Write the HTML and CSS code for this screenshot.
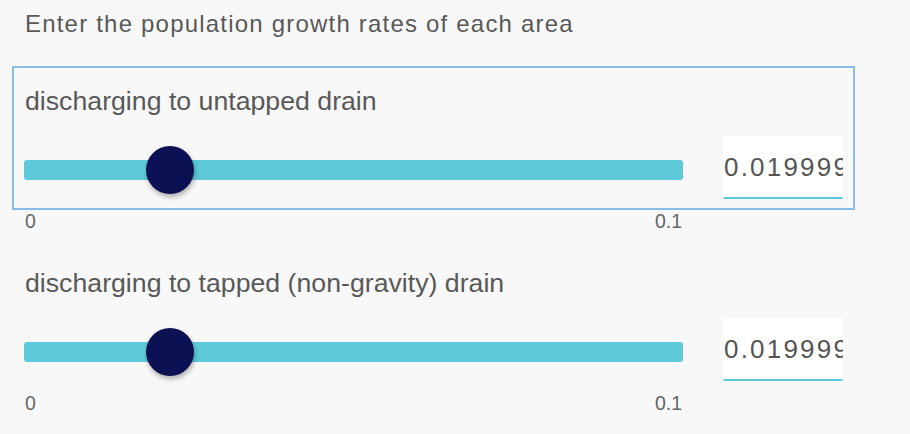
FILE: index.html
```html
<!DOCTYPE html>
<html lang="en">
<head>
<meta charset="utf-8">
<title>Population growth rates</title>
<link rel="stylesheet" href="styles.css">
</head>
<body>
<div class="page">
  <p class="title">Enter the population growth rates of each area</p>

  <div class="field">
    <div class="field-box focused">
      <label class="field-label" for="r1">discharging to untapped drain</label>
      <div class="field-row">
        <div class="slider">
          <input class="range" id="r1" type="range" min="0" max="0.1" step="0.000001" value="0.019999">
        </div>
        <input class="number" type="text" value="0.019999999999999997">
      </div>
    </div>
    <div class="range-labels"><span>0</span><span>0.1</span></div>
  </div>

  <div class="field">
    <div class="field-box">
      <label class="field-label" for="r2">discharging to tapped (non-gravity) drain</label>
      <div class="field-row">
        <div class="slider">
          <input class="range" id="r2" type="range" min="0" max="0.1" step="0.000001" value="0.019999">
        </div>
        <input class="number" type="text" value="0.019999999999999997">
      </div>
    </div>
    <div class="range-labels"><span>0</span><span>0.1</span></div>
  </div>
</div>
</body>
</html>
```
FILE: styles.css
```css
html, body {
  margin: 0;
  padding: 0;
  background: #f8f8f8;
}

body {
  font-family: "Liberation Sans", Arial, sans-serif;
  color: #555;
  width: 910px;
  height: 434px;
  overflow: hidden;
}

.page {
  padding: 9px 0 0 12px;
}

.title {
  margin: 0 0 27px 13px;
  font-size: 24px;
  line-height: 30px;
  letter-spacing: 1.2px;
  color: #595959;
}

.field {
  margin-bottom: 16px;
}

.field-box {
  border: 2px solid transparent;
  padding: 18px 10px 9px 10px;
  box-sizing: content-box;
  width: 819px;
}

.field-box.focused {
  border-color: #88bde9;
}

.field-label {
  display: block;
  margin-left: 1px;
  font-size: 26.7px;
  line-height: 30px;
  color: #595959;
}

.field-row {
  display: flex;
  align-items: flex-start;
  gap: 40px;
  margin-top: 20px;
}

.slider {
  width: 659px;
  height: 63px;
  padding-top: 10px;
  box-sizing: border-box;
}

.range {
  -webkit-appearance: none;
  appearance: none;
  display: block;
  width: 659px;
  height: 48px;
  margin: 0;
  padding: 0;
  background: transparent;
}

.range::-webkit-slider-runnable-track {
  height: 20px;
  border-radius: 3px;
  background: #5ecad9;
}

.range::-webkit-slider-thumb {
  -webkit-appearance: none;
  appearance: none;
  width: 48px;
  height: 48px;
  margin-top: -14px;
  border-radius: 50%;
  background: #0b1152;
  box-shadow: 1px 3px 5px rgba(0, 0, 0, 0.3);
}

.number {
  width: 120px;
  height: 63px;
  box-sizing: border-box;
  margin: 0;
  padding: 2px 0 0 1px;
  border: none;
  border-bottom: 2px solid #5ecad9;
  border-radius: 2px;
  background: #fff;
  font-family: "Liberation Sans", Arial, sans-serif;
  font-size: 26px;
  letter-spacing: 2.2px;
  color: #555;
  outline: none;
}

.range-labels {
  display: flex;
  justify-content: space-between;
  width: 657px;
  margin-left: 13px;
  font-size: 19.5px;
  line-height: 22px;
  color: #666;
}
```
